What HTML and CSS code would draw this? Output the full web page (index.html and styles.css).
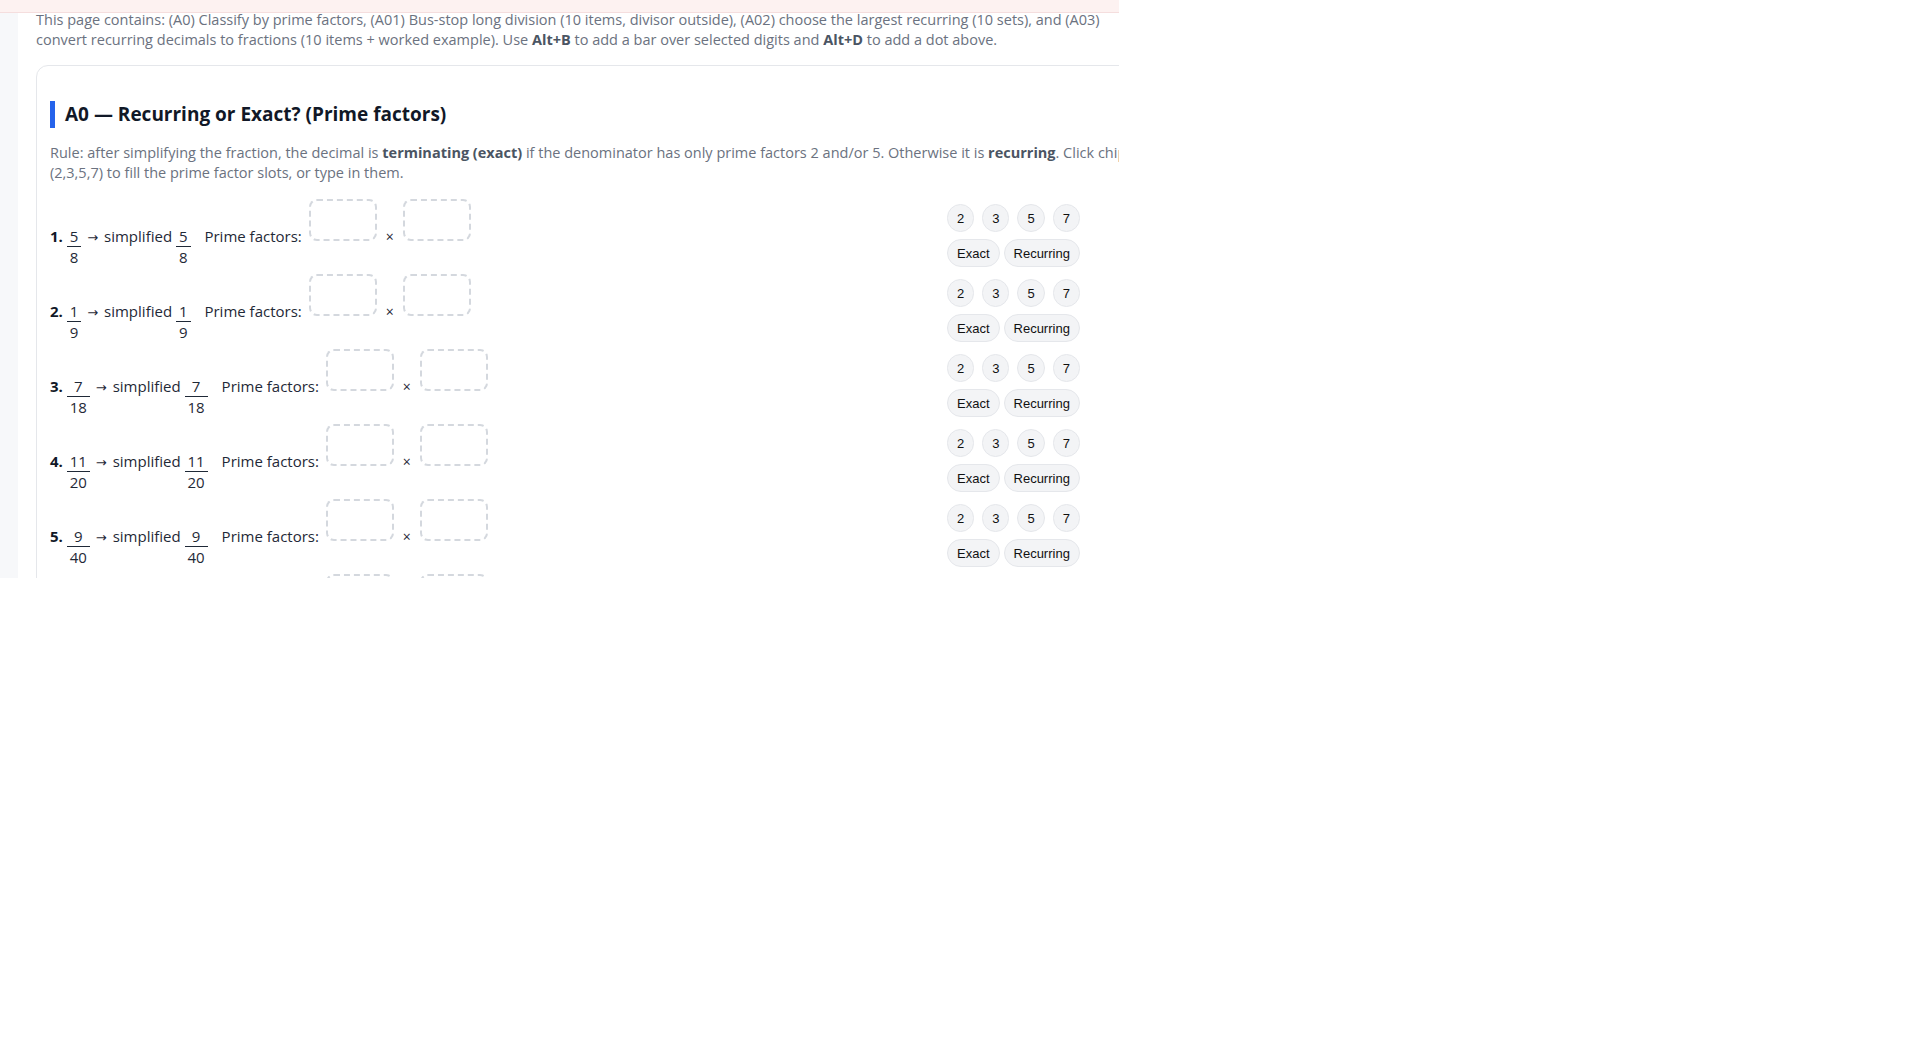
FILE: index.html
```html
<!DOCTYPE html>
<html lang="en">
<head>
<meta charset="utf-8">
<title>Recurring decimals</title>
<link rel="stylesheet" href="styles.css">
</head>
<body>
<div class="frame">
  <div class="topbar"></div>
  <div class="layout">
    <div class="rail"></div>
    <main class="main">
      <p class="intro">This page contains: (A0) Classify by prime factors, (A01) Bus-stop long division (10 items, divisor outside), (A02) choose the largest recurring (10 sets), and (A03) convert recurring decimals to fractions (10 items + worked example). Use <b>Alt+B</b> to add a bar over selected digits and <b>Alt+D</b> to add a dot above.</p>
      <section class="card">
        <h2 class="card-title">A0 — Recurring or Exact? (Prime factors)</h2>
        <p class="rule">Rule: after simplifying the fraction, the decimal is <b>terminating (exact)</b> if the denominator has only prime factors 2 and/or 5. Otherwise it is <b>recurring</b>. Click chips (2,3,5,7) to fill the prime factor slots, or type in them.</p>
        <div class="items">
          <div class="item">
            <div class="q"><b>1.</b> <span class="frac"><span class="n">5</span><span class="d">8</span></span> <span class="arrow">→</span> simplified <span class="frac"><span class="n">5</span><span class="d">8</span></span> <span class="pf">Prime factors:</span> <span class="slot"></span><span class="times">×</span><span class="slot"></span></div>
            <div class="chips"><div class="primes"><button class="chip">2</button><button class="chip">3</button><button class="chip">5</button><button class="chip">7</button></div><div class="kinds"><button class="chip">Exact</button> <button class="chip">Recurring</button></div></div>
          </div>
          <div class="item">
            <div class="q"><b>2.</b> <span class="frac"><span class="n">1</span><span class="d">9</span></span> <span class="arrow">→</span> simplified <span class="frac"><span class="n">1</span><span class="d">9</span></span> <span class="pf">Prime factors:</span> <span class="slot"></span><span class="times">×</span><span class="slot"></span></div>
            <div class="chips"><div class="primes"><button class="chip">2</button><button class="chip">3</button><button class="chip">5</button><button class="chip">7</button></div><div class="kinds"><button class="chip">Exact</button> <button class="chip">Recurring</button></div></div>
          </div>
          <div class="item">
            <div class="q"><b>3.</b> <span class="frac"><span class="n">7</span><span class="d">18</span></span> <span class="arrow">→</span> simplified <span class="frac"><span class="n">7</span><span class="d">18</span></span> <span class="pf">Prime factors:</span> <span class="slot"></span><span class="times">×</span><span class="slot"></span></div>
            <div class="chips"><div class="primes"><button class="chip">2</button><button class="chip">3</button><button class="chip">5</button><button class="chip">7</button></div><div class="kinds"><button class="chip">Exact</button> <button class="chip">Recurring</button></div></div>
          </div>
          <div class="item">
            <div class="q"><b>4.</b> <span class="frac"><span class="n">11</span><span class="d">20</span></span> <span class="arrow">→</span> simplified <span class="frac"><span class="n">11</span><span class="d">20</span></span> <span class="pf">Prime factors:</span> <span class="slot"></span><span class="times">×</span><span class="slot"></span></div>
            <div class="chips"><div class="primes"><button class="chip">2</button><button class="chip">3</button><button class="chip">5</button><button class="chip">7</button></div><div class="kinds"><button class="chip">Exact</button> <button class="chip">Recurring</button></div></div>
          </div>
          <div class="item">
            <div class="q"><b>5.</b> <span class="frac"><span class="n">9</span><span class="d">40</span></span> <span class="arrow">→</span> simplified <span class="frac"><span class="n">9</span><span class="d">40</span></span> <span class="pf">Prime factors:</span> <span class="slot"></span><span class="times">×</span><span class="slot"></span></div>
            <div class="chips"><div class="primes"><button class="chip">2</button><button class="chip">3</button><button class="chip">5</button><button class="chip">7</button></div><div class="kinds"><button class="chip">Exact</button> <button class="chip">Recurring</button></div></div>
          </div>
          <div class="item">
            <div class="q"><b>6.</b> <span class="frac"><span class="n">3</span><span class="d">14</span></span> <span class="arrow">→</span> simplified <span class="frac"><span class="n">3</span><span class="d">14</span></span> <span class="pf">Prime factors:</span> <span class="slot"></span><span class="times">×</span><span class="slot"></span></div>
            <div class="chips"><div class="primes"><button class="chip">2</button><button class="chip">3</button><button class="chip">5</button><button class="chip">7</button></div><div class="kinds"><button class="chip">Exact</button> <button class="chip">Recurring</button></div></div>
          </div>
        </div>
      </section>
    </main>
  </div>
</div>
</body>
</html>
```

FILE: styles.css
```css
html, body {
  margin: 0;
  padding: 0;
  background: #ffffff;
}

.frame {
  position: relative;
  width: 1119px;
  height: 578px;
  overflow: hidden;
  background: #ffffff;
  font-family: "Open Sans", "Noto Sans", sans-serif;
}

.topbar {
  position: absolute;
  left: 0;
  top: 0;
  right: 0;
  height: 12px;
  background: #fdf2f1;
  border-bottom: 1px solid #f5dede;
  z-index: 2;
}

.layout {
  display: flex;
  height: 100%;
}

.rail {
  flex: none;
  width: 18px;
  background: #f7f8fa;
}

.main {
  flex: none;
  width: 1112px;
  padding: 10px 0 0 18px;
  background: #ffffff;
}

.intro {
  margin: 0 0 15px;
  font-size: 14.5px;
  line-height: 20px;
  color: #6b7280;
}

.intro b {
  color: #4b5563;
  font-weight: 700;
}

.card {
  border: 1px solid #e5e7eb;
  border-radius: 12px;
  padding: 15px 13px 20px;
  background: #ffffff;
}

.card-title {
  margin: 20px 0 0;
  padding-left: 10px;
  border-left: 5px solid #2563eb;
  font-size: 19px;
  line-height: 27px;
  font-weight: 700;
  color: #111827;
}

.rule {
  margin: 15px 0 0;
  font-size: 14.5px;
  line-height: 20px;
  color: #6b7280;
}

.rule b {
  color: #4b5563;
}

.items {
  display: flex;
  flex-direction: column;
  gap: 7px;
  margin-top: 16px;
}

.item {
  display: grid;
  grid-template-columns: 897px auto;
  align-items: center;
}

.q {
  font-size: 15px;
  line-height: 20px;
  color: #1f2937;
}

.q b {
  font-weight: 700;
  color: #111827;
}

.arrow {
  margin: 0 2px;
  font-family: "DejaVu Sans", sans-serif;
  font-size: 13px;
}

.frac {
  display: inline-flex;
  flex-direction: column;
  vertical-align: baseline;
}

.frac .n {
  display: block;
  padding: 0 3px;
  border-bottom: 1px solid #1f2937;
  text-align: center;
}

.frac .d {
  display: block;
  padding: 0 3px;
  text-align: center;
}

.pf {
  margin-left: 10px;
  margin-right: 3px;
}

.slot {
  display: inline-block;
  width: 64px;
  height: 38px;
  border: 2px dashed #d4d8de;
  border-radius: 8px;
  margin-bottom: 1px;
  vertical-align: baseline;
}

.times {
  display: inline-block;
  width: 26px;
  text-align: center;
  font-size: 14px;
}

.chips {
  display: flex;
  flex-direction: column;
  gap: 7px;
  padding-top: 5px;
}

.primes {
  display: flex;
  gap: 8px;
}

.kinds {
  display: flex;
  gap: 4px;
}

.chip {
  display: inline-flex;
  align-items: center;
  justify-content: center;
  height: 28px;
  padding: 0 9px;
  border: 1px solid #e5e7eb;
  border-radius: 999px;
  background: #f3f4f6;
  font-family: "Liberation Sans", Arial, sans-serif;
  font-size: 13px;
  color: #111111;
}
```
